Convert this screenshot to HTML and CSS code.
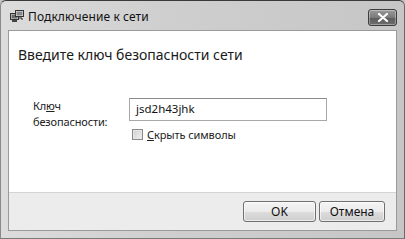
FILE: index.html
```html
<!DOCTYPE html>
<html lang="ru">
<head>
<meta charset="utf-8">
<link rel="stylesheet" href="styles.css">
</head>
<body>
<div class="window">
  <div class="titlebar">
    <svg class="app-icon" width="14" height="13" viewBox="0 0 14 13">
      <rect x="0.5" y="3.5" width="8" height="6" fill="#d8d8d8" stroke="#333"/>
      <rect x="1.5" y="4.5" width="6" height="4" fill="#6a6a6a"/>
      <rect x="5.5" y="0.5" width="8" height="6" fill="#e8e8e8" stroke="#333"/>
      <rect x="6.5" y="1.5" width="6" height="4" fill="#888"/>
      <rect x="2" y="10" width="5" height="2" fill="#444"/>
      <path d="M9 8 L12 8 L12 10" fill="none" stroke="#222" stroke-width="1"/>
    </svg>
    <span class="title">Подключение к сети</span>
    <div class="close"><svg width="12" height="9" viewBox="0 0 12 9"><path d="M2 1 L10 8 M10 1 L2 8" stroke="#fff" stroke-width="2.2" stroke-linecap="round"/></svg></div>
  </div>
  <div class="client">
    <div class="content">
      <h1 class="heading">Введите ключ безопасности сети</h1>
      <div class="form">
        <div class="label">Кл<u>ю</u>ч<br>безопасности:</div>
        <div class="fields">
          <div class="input">jsd2h43jhk</div>
          <label class="check"><span class="box"></span><span><u>С</u>крыть символы</span></label>
        </div>
      </div>
    </div>
    <div class="footer">
      <div class="btn btn-ok">OK</div>
      <div class="btn btn-cancel">Отмена</div>
    </div>
  </div>
</div>
</body>
</html>
```
FILE: styles.css
```css
html, body { margin: 0; padding: 0; }
body { width: 405px; height: 239px; overflow: hidden; background: #c4c4c4; font-family: "Noto Sans", "Open Sans", sans-serif; color: #1e1e1e; }
.window {
  width: 405px; height: 239px; box-sizing: border-box;
  display: flex; flex-direction: column;
  background: linear-gradient(to right, #dcdcdc 0%, #cfcfcf 40%, #c6c6c6 100%);
  border-top: 1px solid #3a3a3a;
  border-right: 1px solid #6a6a6a;
  border-bottom: 1px solid #7a7a7a;
  border-left: 1px solid #8a8a8a;
  border-radius: 6px 6px 0 0;
  padding: 0 7px 7px 7px;
}
.titlebar { height: 29px; display: flex; align-items: center; position: relative; }
.app-icon { margin-left: 2px; margin-top: 1px; }
.title { margin-left: 4px; font-size: 12px; color: #111; margin-top: 1px; letter-spacing: 0.1px; }
.close {
  position: absolute; right: 0; top: 8px;
  width: 29px; height: 17px; box-sizing: border-box;
  border: 1px solid #3c3c3c; border-radius: 3px;
  background: linear-gradient(to bottom, #9a9a9a 0%, #7a7a7a 50%, #5c5c5c 51%, #6e6e6e 100%);
  display: flex; align-items: center; justify-content: center;
  box-shadow: inset 0 0 0 1px rgba(255,255,255,0.35);
}
.client { flex: 1; display: flex; flex-direction: column; background: #fff; border: 1px solid #9a9a9a; }
.content { flex: 1; padding: 0 9px; }
.heading { font-size: 14px; font-weight: normal; margin: 14px 0 0 0; color: #1a1a1a; line-height: 20px; }
.form { display: flex; margin-top: 33px; margin-left: 15px; }
.label { width: 96px; font-size: 11px; line-height: 16px; color: #222; letter-spacing: -0.15px; }
.fields { display: flex; flex-direction: column; }
.input {
  width: 198px; height: 23px; box-sizing: border-box;
  border: 1px solid #a8a8a8; border-top-color: #8a8a8a;
  font-size: 11.5px; line-height: 20px; padding-left: 6px; color: #111;
}
.check { display: flex; align-items: center; margin-top: 6px; margin-left: 3px; font-size: 11px; color: #222; letter-spacing: -0.1px; }
.box { width: 11px; height: 11px; box-sizing: border-box; border: 1px solid #8a8a8a; background: linear-gradient(135deg, #cfcfcf, #f2f2f2); margin-right: 4px; box-shadow: inset 0 0 0 1px #e6e6e6; }
.footer {
  height: 38px; box-sizing: border-box; background: #ececec; border-top: 1px solid #d4d4d4;
  display: flex; justify-content: flex-end; align-items: center; padding-right: 11px; gap: 3px;
}
.btn {
  height: 21px; box-sizing: border-box; border: 1px solid #707070; border-radius: 3px;
  background: linear-gradient(to bottom, #f4f4f4 0%, #ebebeb 50%, #dddddd 51%, #cfcfcf 100%);
  font-size: 12px; display: flex; align-items: center; justify-content: center; color: #111;
  box-shadow: inset 0 0 0 1px rgba(255,255,255,0.6);
}
.btn-ok { width: 73px; }
.btn-cancel { width: 66px; }
u { text-decoration: underline; text-underline-offset: 1px; }
```
